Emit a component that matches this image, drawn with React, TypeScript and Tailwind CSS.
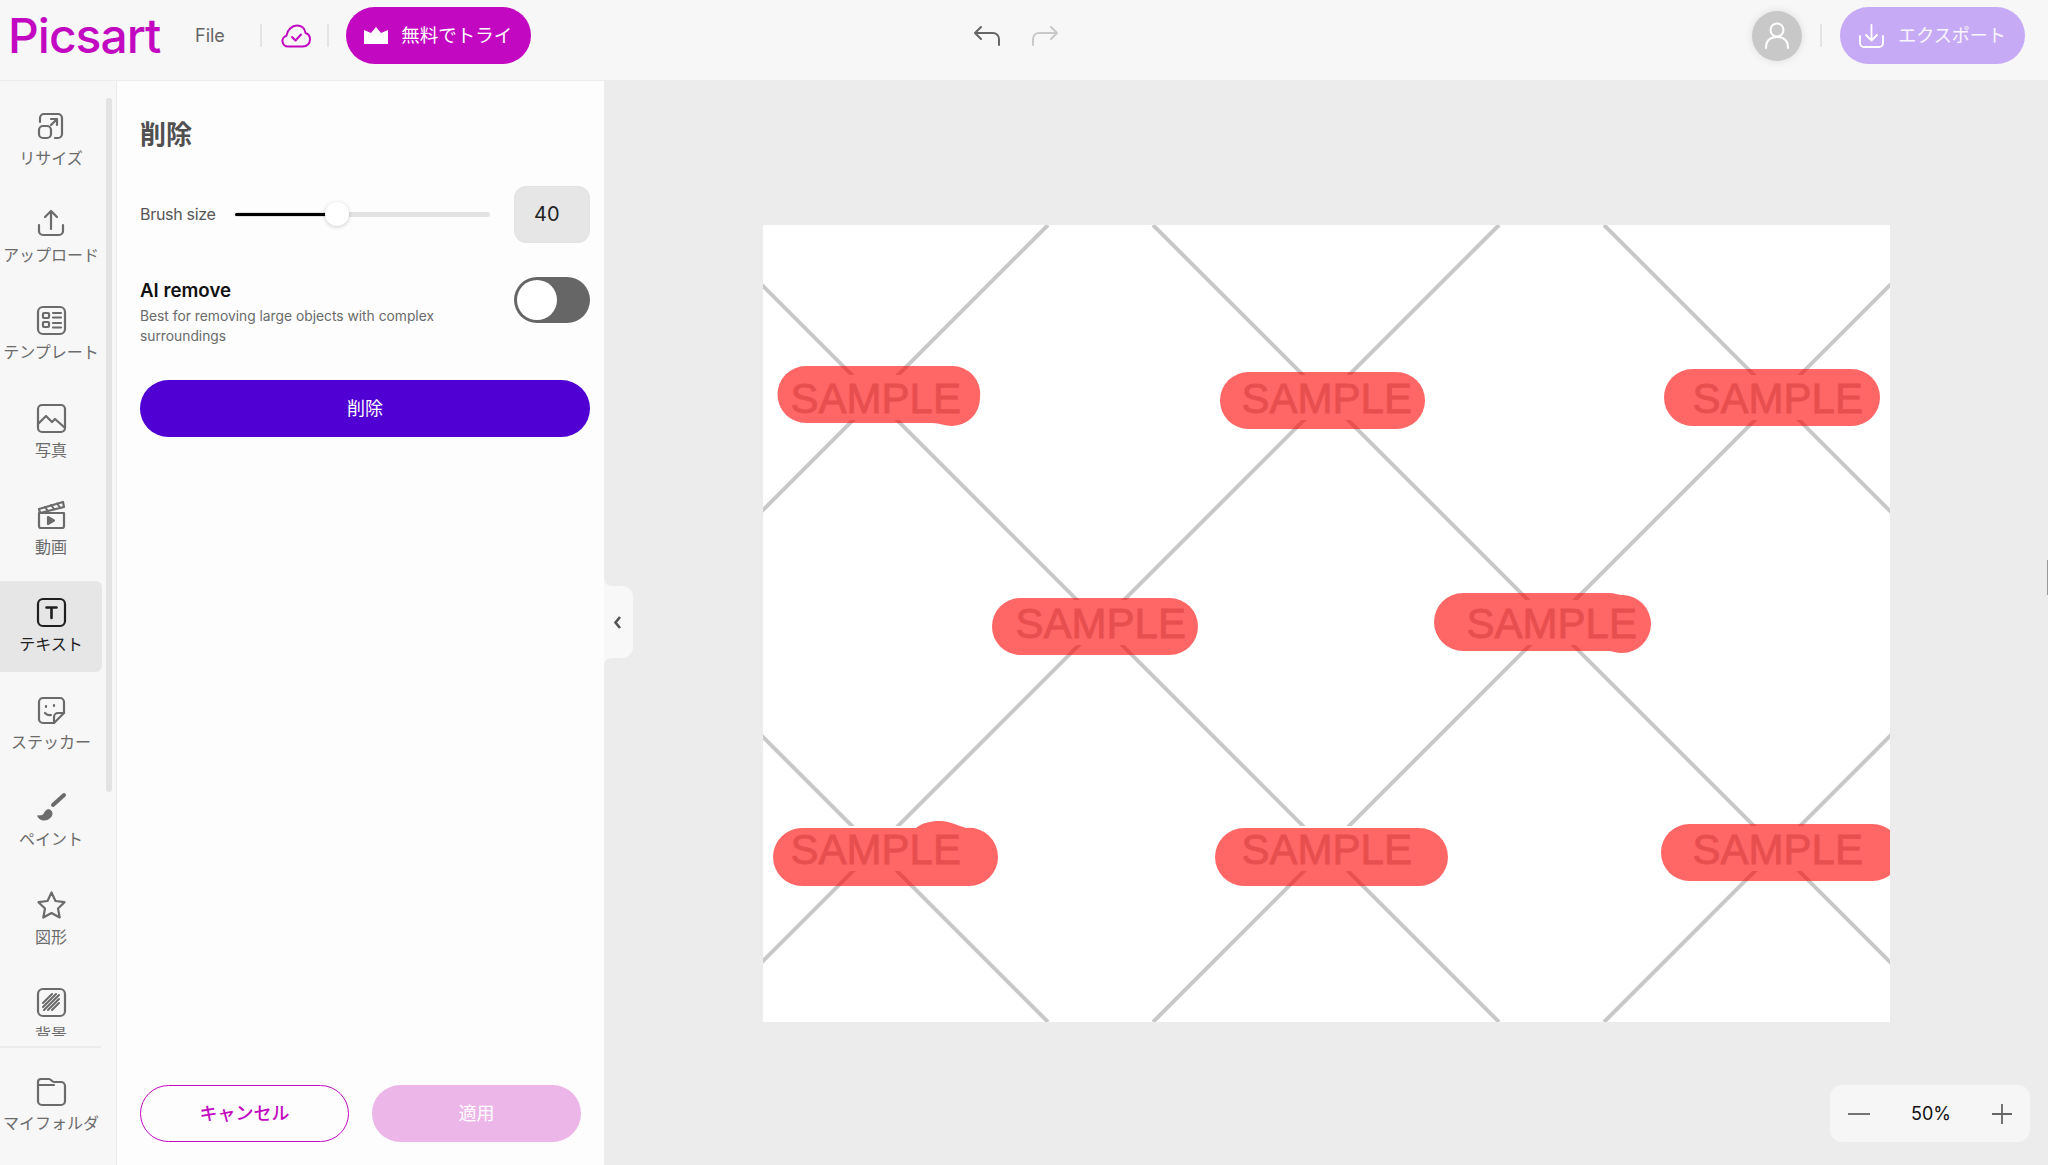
import React from "react";

const jp = "font-['Inter','Noto_Sans_CJK_JP',sans-serif]";

const icons: Record<string, React.ReactNode> = {
  resize: (
    <>
      <path d="M4 11V7a4 4 0 0 1 4-4h14a4 4 0 0 1 4 4v16a4 4 0 0 1-4 4h-3" />
      <rect x="3" y="15" width="12" height="12" rx="4" />
      <path d="M15 8h6v6M21 8l-6 6" />
    </>
  ),
  upload: (
    <>
      <path d="M15 21V3M9 9l6-6 6 6" />
      <path d="M3 17v6a4 4 0 0 0 4 4h16a4 4 0 0 0 4-4v-6" />
    </>
  ),
  template: (
    <>
      <rect x="2" y="2" width="27" height="27" rx="5" />
      <rect x="7" y="8" width="6" height="5" rx="1" />
      <rect x="7" y="17" width="6" height="5" rx="1" />
      <path d="M17 8h8M17 12.5h8M17 18h8M17 22.500h8" />
    </>
  ),
  photo: (
    <>
      <rect x="2" y="2" width="27" height="27" rx="4" />
      <path d="M2 21l8-8 6 6 3-3 9 8" />
    </>
  ),
  video: (
    <>
      <path d="M3 13h25v13a2 2 0 0 1-2 2H5a2 2 0 0 1-2-2z" />
      <path d="M3 9l24-7 1 5-24 6z" />
      <path d="M9 7l3 4M15 5l3 4M21 3.500l3 4" strokeWidth="2" />
      <path d="M12 17l6 3.500-6 3.500z" fill="#6b6b6b" />
    </>
  ),
  text: (
    <>
      <rect x="2" y="2" width="27" height="27" rx="5" />
      <path d="M10.500 10.500h10M15.500 10.500v10.500" strokeWidth="2.600" />
    </>
  ),
  sticker: (
    <>
      <path d="M7 3h17a4 4 0 0 1 4 4v11l-10 10H7a4 4 0 0 1-4-4V7a4 4 0 0 1 4-4z" />
      <path d="M18 28v-6a4 4 0 0 1 4-4h6" />
      <path d="M10 11v1M18 10v1M9 18c2 2 4 2.500 6 2" />
    </>
  ),
  paint: (
    <>
      <path d="M28 3L17 13" strokeWidth="4" />
      <path d="M2 24c4 0 6-1 7-4 1.500-3.500 7-3 7 1.500 0 4-4 6.500-8 6.500-3.500 0-6-2-6-4z" fill="#6b6b6b" strokeWidth="1" />
    </>
  ),
  shape: <path d="M15.500 2.500l4 8.500 9 1.200-6.500 6.300 1.700 9-8.200-4.500-8.200 4.500 1.700-9L2.500 12.200l9-1.200z" />,
  background: (
    <>
      <rect x="2" y="2" width="27" height="27" rx="5" />
      <path d="M7 16l9-9M7 20l13-13M8 23l15-15M12 23l11-11M16 23l7-7" strokeWidth="2" />
    </>
  ),
  folder: (
    <>
      <path d="M2 9V6a3 3 0 0 1 3-3h8c2 0 3 3 5 3h7a4 4 0 0 1 4 4v15a4 4 0 0 1-4 4H6a4 4 0 0 1-4-4z" />
      <path d="M2 9h16" />
    </>
  ),
};

type ToolProps = { icon: string; label: string; active?: boolean };

const Tool = ({ icon, label, active }: ToolProps) => (
  <div className={`flex h-[91px] w-[102px] shrink-0 flex-col items-center rounded-r-md pt-[16.5px] ${active ? "bg-[#e6e6e6]" : ""}`}>
    <svg
      width="31"
      height="31"
      viewBox="0 0 31 31"
      fill="none"
      stroke={active ? "#1f1f1f" : "#6b6b6b"}
      strokeWidth="2.200"
      strokeLinecap="round"
      strokeLinejoin="round"
    >
      {icons[icon]}
    </svg>
    <span className={`mt-[5px] whitespace-nowrap text-[16px] leading-[22px] ${active ? "text-[#222222]" : "text-[#6b6b6b]"}`}>
      {label}
    </span>
  </div>
);

const tools: ToolProps[] = [
  { icon: "resize", label: "リサイズ" },
  { icon: "upload", label: "アップロード" },
  { icon: "template", label: "テンプレート" },
  { icon: "photo", label: "写真" },
  { icon: "video", label: "動画" },
  { icon: "text", label: "テキスト", active: true },
  { icon: "sticker", label: "ステッカー" },
  { icon: "paint", label: "ペイント" },
  { icon: "shape", label: "図形" },
  { icon: "background", label: "背景" },
];

const Divider = () => <div className="h-[23px] w-[2px] bg-[#e4e4e4]" />;

const Header = () => (
  <header className="flex h-[81px] shrink-0 items-center border-b border-[#ececec] bg-[#f7f7f7] pb-[9px] pl-[8px] pr-[23px]">
    <span className="w-[160px] text-[48px] font-medium leading-none tracking-[-1px] text-[#c209c1]">
      Picsart
    </span>
    <span className="ml-[27px] text-[18px] text-[#666666]">File</span>
    <div className="ml-[35px]">
      <Divider />
    </div>
    <svg className="ml-[19px]" width="30" height="24" viewBox="0 0 30 24" fill="none" stroke="#c209c1" strokeWidth="2" strokeLinecap="round" strokeLinejoin="round">
      <path d="M7 22.500a5.500 5.500 0 0 1-1.500-10.800C6 6 11 1.500 16 1.500c4.500 0 8 3 8.500 7.500 3 .8 4.500 3.500 4.500 6.500a7 7 0 0 1-7 7z" />
      <path d="M11 13l3.500 3.500 5.500-6" />
    </svg>
    <div className="ml-[16px]">
      <Divider />
    </div>
    <button className="ml-[17px] flex h-[57px] w-[185px] items-center justify-center gap-[13px] rounded-full bg-[#c209c1] text-[18.5px] text-white">
      <svg width="24" height="17" viewBox="0 0 24 17" fill="white">
        <path d="M0 3l7 3 5-6 5 6 7-3v14H0z" />
      </svg>
      無料でトライ
    </button>
    <div className="ml-[443px] flex items-center gap-[32px]">
      <svg width="26" height="20" viewBox="0 0 26 20" fill="none" stroke="#666666" strokeWidth="2" strokeLinecap="round" strokeLinejoin="round">
        <path d="M7 1L1 7l6 6M1 7h18a6 6 0 0 1 6 6v6" />
      </svg>
      <svg width="26" height="20" viewBox="0 0 26 20" fill="none" stroke="#c9c9c9" strokeWidth="2" strokeLinecap="round" strokeLinejoin="round">
        <path d="M19 1l6 6-6 6M25 7H7a6 6 0 0 0-6 6v6" />
      </svg>
    </div>
    <div className="ml-auto flex h-[50px] w-[50px] items-center justify-center rounded-full bg-[#c8c8c8] shadow-[0_0_8px_rgba(0,0,0,0.1)]">
      <svg width="26" height="27" viewBox="0 0 26 27" fill="none" stroke="white" strokeWidth="2" strokeLinecap="round">
        <circle cx="13" cy="8" r="6.500" />
        <path d="M2 26c0-7 4-11 11-11s11 4 11 11" />
      </svg>
    </div>
    <div className="ml-[18px]">
      <Divider />
    </div>
    <button className="ml-[18px] flex h-[57px] w-[185px] items-center justify-center gap-[14px] rounded-full bg-[#c7aaf5] text-[18px] text-white/90">
      <svg width="25" height="24" viewBox="0 0 25 24" fill="none" stroke="white" strokeWidth="1.800" strokeLinecap="round" strokeLinejoin="round">
        <path d="M12.500 1v15M7 11l5.500 5.500L18 11" />
        <path d="M1 12v7a4 4 0 0 0 4 4h15a4 4 0 0 0 4-4v-7" />
      </svg>
      エクスポート
    </button>
  </header>
);

const Sidebar = () => (
  <aside className="relative flex w-[117px] shrink-0 flex-col border-r border-[#ececec] bg-[#f7f7f7]">
    <div className="flex h-[955px] flex-col gap-[6.4px] overflow-hidden pt-[13px]">
      {tools.map((t) => (
        <Tool key={t.icon} {...t} />
      ))}
    </div>
    <div className="mt-[10px] h-[2px] w-[101px] bg-[#ebebeb]" />
    <div className="mt-[11px]">
      <Tool icon="folder" label="マイフォルダ" />
    </div>
    {/* scrollbar thumb */}
    <div className="absolute left-[106px] top-[17px] h-[694px] w-[6px] rounded-full bg-[#e3e3e3]" />
  </aside>
);

const Panel = () => (
  <section className="relative flex w-[487px] shrink-0 flex-col bg-[#fdfdfd] pl-[23px] pr-[14px]">
    <h1 className="mt-[36px] text-[26px] font-bold leading-[36px] text-[#505050]">削除</h1>
    <div className="mt-[33px] flex h-[57px] items-center">
      <span className="mb-[2px] w-[95px] text-[16px] tracking-[-0.3px] text-[#555555]">Brush size</span>
      <div className="relative h-[5px] w-[255px] rounded-full bg-[#e3e3e3]">
        <div className="absolute left-0 top-[1px] h-[3px] w-[95px] rounded-full bg-black" />
        <div className="absolute left-[90px] top-[-10px] h-[24px] w-[24px] rounded-full bg-white shadow-[0_1px_4px_rgba(0,0,0,0.2)]" />
      </div>
      <div className="ml-auto flex h-[57px] w-[76px] items-center rounded-[12px] border border-[#e2e2e2] bg-[#e6e6e6] pb-[1px] pl-[19px] text-[20px] text-[#222222]">
        40
      </div>
    </div>
    <div className="mt-[34px] flex justify-between">
      <div className="w-[340px]">
        <div className="text-[18.7px] font-semibold leading-[28px] text-[#111111]">AI remove</div>
        <p className="mt-[0.5px] text-[13.8px] leading-[20.5px] text-[#6a6a6a]">
          Best for removing large objects with complex surroundings
        </p>
      </div>
      <div className="flex h-[46px] w-[76px] items-center rounded-full bg-[#666666] pl-[3px]">
        <div className="h-[40px] w-[40px] rounded-full bg-white" />
      </div>
    </div>
    <button className="mt-[33px] h-[57px] rounded-full bg-[#5000d2] text-[18px] text-white">削除</button>
    <div className="absolute bottom-[23px] left-[23px] flex gap-[23px]">
      <button className="h-[57px] w-[209px] rounded-full border-[1.5px] border-[#c209c1] text-[18px] font-medium text-[#c209c1]">キャンセル</button>
      <button className="h-[57px] w-[209px] rounded-full bg-[#ecb6e9] text-[18px] text-white">適用</button>
    </div>
  </section>
);

const sums = [1273, 1724, 2175, 2626];
const diffs = [26, 477, 928, 1379];
const marks = [
  [875, 398],
  [1326, 398],
  [1777, 398],
  [1100, 623],
  [1551, 623],
  [875, 849],
  [1326, 849],
  [1777, 849],
];

// the photo on the canvas: watermark lattice with brush strokes over it
const Canvas = () => (
  <svg className="block" width="1127" height="797" viewBox="763 225 1127 797">
    <rect x="763" y="225" width="1127" height="797" fill="white" />
    {sums.map((c) => (
      <line key={c} x1={c - 225} y1={225} x2={c - 1022} y2={1022} stroke="#c8c8c8" strokeWidth="4" />
    ))}
    {diffs.map((d) => (
      <line key={d} x1={d + 225} y1={225} x2={d + 1022} y2={1022} stroke="#c8c8c8" strokeWidth="4" />
    ))}
    {marks.map(([x, y]) => (
      <g key={`${x}-${y}`}>
        <rect x={x - 84} y={y - 23} width={168} height={45} fill="white" />
        <text
          x={x - 84.500}
          y={y + 15}
          fontFamily="'Liberation Sans', sans-serif"
          fontSize="42"
          fill="#c4c4c4"
          stroke="#c4c4c4"
          strokeWidth="0.800"
        >
          SAMPLE
        </text>
      </g>
    ))}
    <g fill="#ff0000" opacity="0.6">
      <path d="M806 366H952a28 28 0 0 1 28 32a28 28 0 0 1-28 28c-8 0-12-3-20-3H806a28.500 28.500 0 0 1 0-57z" />
      <rect x="1220" y="372" width="205" height="57" rx="28.500" />
      <rect x="1664" y="369" width="216" height="57" rx="28.500" />
      <rect x="992" y="598" width="206" height="57" rx="28.500" />
      <path d="M1463 593H1610c4 0 8 2 13 2a29 29 0 0 1 28 29a29 29 0 0 1-29 29c-6 0-10-2-14-2H1463a29 29 0 0 1 0-58z" />
      <path d="M802 828H916c6-5 14-7 24-7c10 0 16 4 26 7a29 29 0 0 1 32 29a29 29 0 0 1-29 29H802a29 29 0 0 1 0-58z" />
      <rect x="1215" y="828" width="233" height="58" rx="29" />
      <rect x="1661" y="824" width="240" height="57" rx="28.500" />
    </g>
  </svg>
);

const Workspace = () => (
  <main className="relative flex min-w-0 flex-1 items-center justify-center bg-[#ececec]">
    <Canvas />
    {/* collapse handle */}
    <svg className="absolute left-0 top-[497px]" width="29" height="88" viewBox="0 0 29 88">
      <path d="M0 0c0 6 4 8 9 8h9a11 11 0 0 1 11 11v50a11 11 0 0 1-11 11H9c-5 0-9 2-9 8z" fill="#f8f8f8" />
      <path d="M16 39l-4.500 5.500 4.500 5.500" fill="none" stroke="#555555" strokeWidth="2.600" />
    </svg>
    <div className="absolute bottom-[23px] right-[18px] flex h-[57px] w-[200px] items-center justify-between rounded-[12px] bg-[#f6f6f6] px-[18px]">
      <svg width="22" height="20" viewBox="0 0 22 20" fill="none" stroke="#666666" strokeWidth="1.800">
        <path d="M0 10h22" />
      </svg>
      <span className="text-[18px] text-[#111111]">50%</span>
      <svg width="20" height="20" viewBox="0 0 20 20" fill="none" stroke="#666666" strokeWidth="1.800">
        <path d="M0 10h20M10 0v20" />
      </svg>
    </div>
    <div className="absolute right-0 top-[479px] h-[35px] w-px bg-[#999999]" />
  </main>
);

export default function App() {
  return (
    <div className={`flex h-[1165px] w-[2048px] flex-col overflow-hidden ${jp}`}>
      <Header />
      <div className="flex min-h-0 flex-1">
        <Sidebar />
        <Panel />
        <Workspace />
      </div>
    </div>
  );
}
